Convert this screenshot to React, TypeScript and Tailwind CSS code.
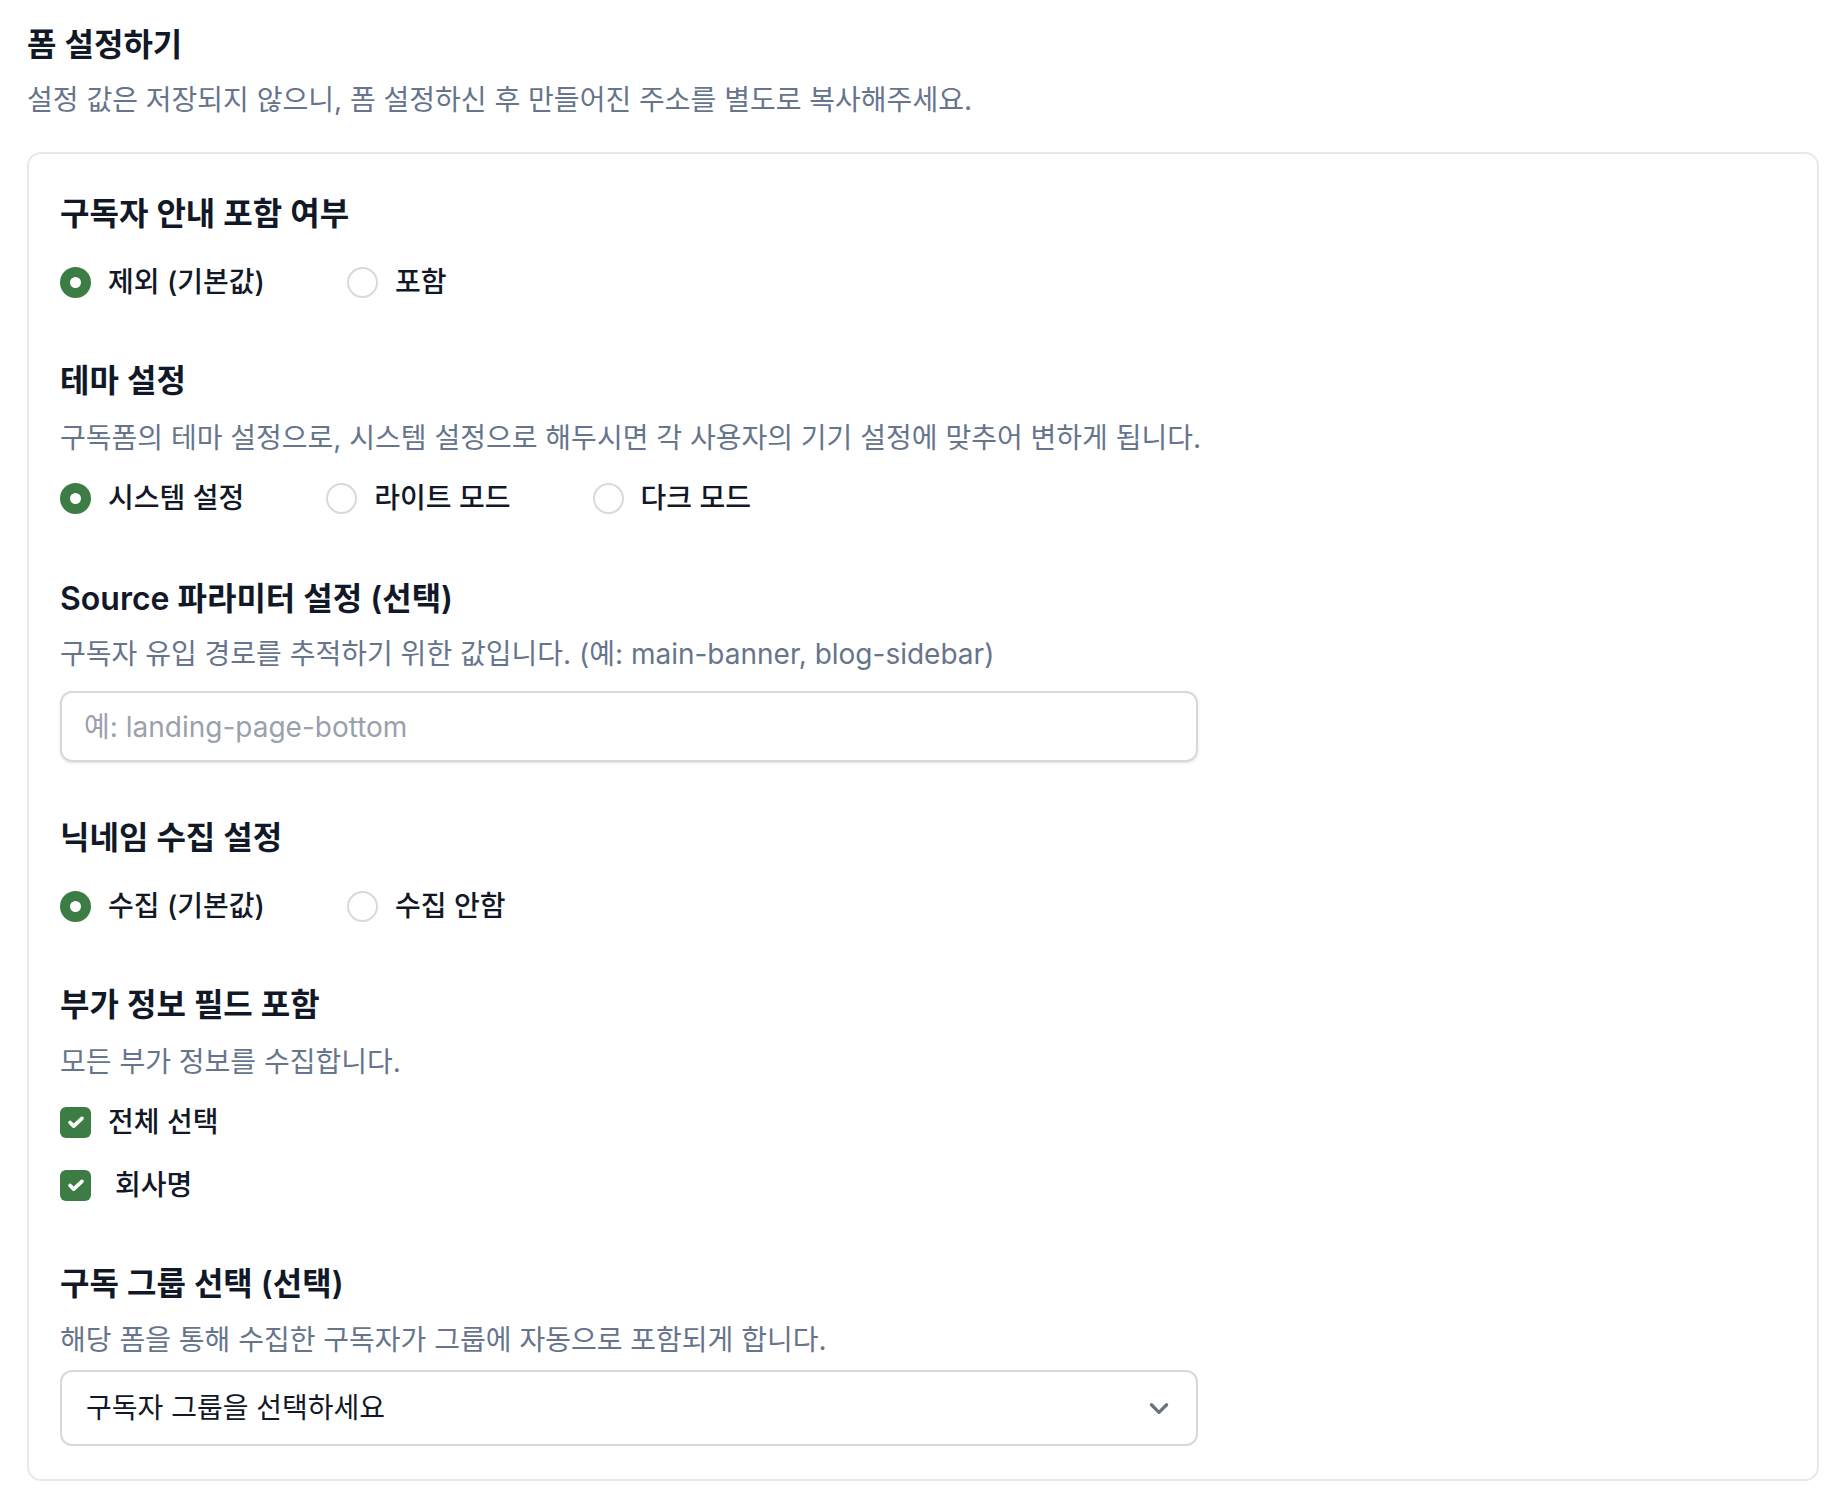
import React from "react";

const font = { fontFamily: '"Inter", "Noto Sans CJK KR", sans-serif' };

function Radio({ checked, label }: { checked?: boolean; label: string }) {
  return (
    <label className="flex items-center gap-[17px] h-[40px]">
      {checked ? (
        <span className="w-[31px] h-[31px] rounded-full bg-[#3d7d45] flex items-center justify-center">
          <span className="w-[11px] h-[11px] rounded-full bg-white" />
        </span>
      ) : (
        <span className="w-[31px] h-[31px] rounded-full border-2 border-[#d6d9de] bg-white" />
      )}
      <span className="text-[28px] font-medium text-[#111827] leading-[40px]">{label}</span>
    </label>
  );
}

function Checkbox({ label, extra }: { label: string; extra?: boolean }) {
  return (
    <label className="flex items-center h-[40px]">
      <span className="w-[31px] h-[31px] rounded-[6px] bg-[#3d7d45] flex items-center justify-center">
        <svg width="22" height="22" viewBox="0 0 24 24" fill="none" stroke="white" strokeWidth="4" strokeLinecap="round" strokeLinejoin="round">
          <path d="M5.5 12.5l4 4L18.5 8" />
        </svg>
      </span>
      <span className={`text-[28px] font-medium text-[#111827] leading-[40px] ${extra ? "ml-[24px]" : "ml-[17px]"}`}>{label}</span>
    </label>
  );
}

function Heading({ children }: { children: React.ReactNode }) {
  return <h3 className="text-[32px] font-semibold text-[#111827] leading-[40px]">{children}</h3>;
}

function Desc({ children, className = "" }: { children: React.ReactNode; className?: string }) {
  return <p className={`text-[28px] text-[#66758c] leading-[38px] ${className}`}>{children}</p>;
}

export default function App() {
  return (
    <div className="bg-white min-h-[1506px] w-full px-[27px] pt-[25px]" style={font}>
      <h2 className="text-[32px] font-semibold text-[#111827] leading-[40px]">폼 설정하기</h2>
      <Desc className="mt-[16px]">설정 값은 저장되지 않으니, 폼 설정하신 후 만들어진 주소를 별도로 복사해주세요.</Desc>

      <div className="mt-[33px] border-2 border-[#e8e9ec] rounded-[14px] pl-[31px] pr-[31px] pt-[40px] pb-[33px] flex flex-col gap-[59px]">
        <section>
          <Heading>구독자 안내 포함 여부</Heading>
          <div className="flex gap-[82px] mt-[28px]">
            <Radio checked label="제외 (기본값)" />
            <Radio label="포함" />
          </div>
        </section>

        <section>
          <Heading>테마 설정</Heading>
          <Desc className="mt-[18px]">구독폼의 테마 설정으로, 시스템 설정으로 해두시면 각 사용자의 기기 설정에 맞추어 변하게 됩니다.</Desc>
          <div className="flex gap-[82px] mt-[21px]">
            <Radio checked label="시스템 설정" />
            <Radio label="라이트 모드" />
            <Radio label="다크 모드" />
          </div>
        </section>

        <section className="mt-[2px]">
          <Heading>Source 파라미터 설정 (선택)</Heading>
          <Desc className="mt-[16px]">구독자 유입 경로를 추적하기 위한 값입니다. (예: main-banner, blog-sidebar)</Desc>
          <input
            type="text"
            placeholder="예: landing-page-bottom"
            className="mt-[18px] w-[1138px] h-[71px] rounded-[12px] border-2 border-[#d5d8dd] shadow-sm px-[22px] text-[28px] text-[#111827] placeholder:text-[#9aa1ad] outline-none"
          />
        </section>

        <section className="-mt-[3px]">
          <Heading>닉네임 수집 설정</Heading>
          <div className="flex gap-[82px] mt-[28px]">
            <Radio checked label="수집 (기본값)" />
            <Radio label="수집 안함" />
          </div>
        </section>

        <section>
          <Heading>부가 정보 필드 포함</Heading>
          <Desc className="mt-[18px]">모든 부가 정보를 수집합니다.</Desc>
          <div className="flex flex-col gap-[23px] mt-[21px]">
            <Checkbox label="전체 선택" />
            <Checkbox label="회사명" extra />
          </div>
        </section>

        <section>
          <Heading>구독 그룹 선택 (선택)</Heading>
          <Desc className="mt-[17px]">해당 폼을 통해 수집한 구독자가 그룹에 자동으로 포함되게 합니다.</Desc>
          <div className="mt-[11px] w-[1138px] h-[76px] rounded-[12px] border-2 border-[#d5d8dd] flex items-center justify-between pl-[24px] pr-[24px]">
            <span className="text-[28px] text-[#111827]">구독자 그룹을 선택하세요</span>
            <svg width="26" height="26" viewBox="0 0 24 24" fill="none" stroke="#6b7280" strokeWidth="3" strokeLinecap="round" strokeLinejoin="round">
              <path d="M5 9l7 7 7-7" />
            </svg>
          </div>
        </section>
      </div>
    </div>
  );
}
